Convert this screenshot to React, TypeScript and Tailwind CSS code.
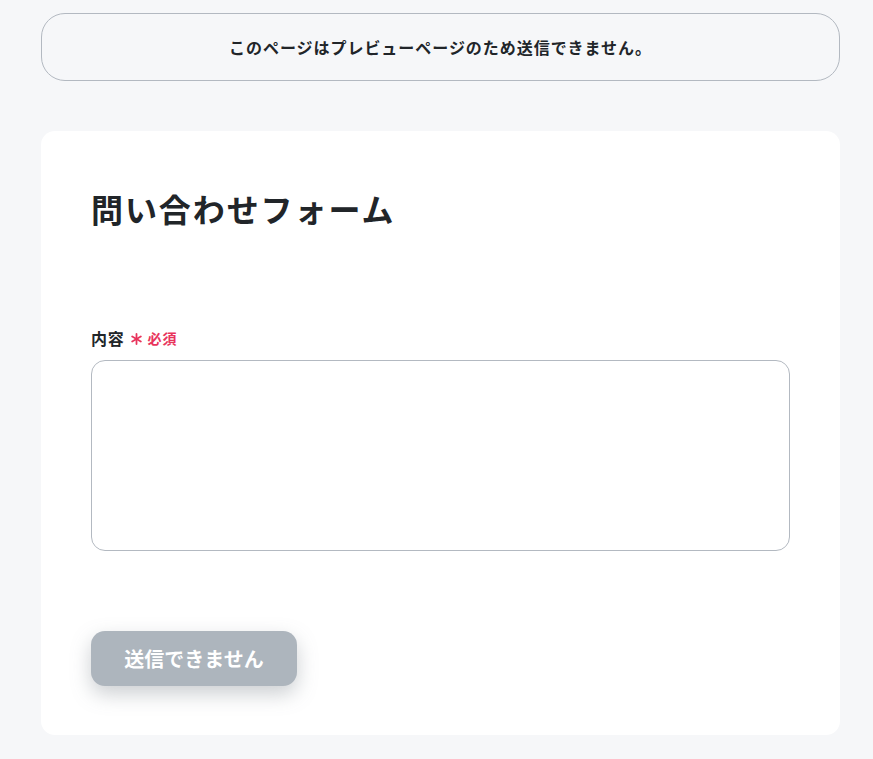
export default function App() {
  return (
    <div
      className="min-h-screen bg-[#f6f7f9] pt-[13px] pb-6 pl-[41px] pr-[33px] text-[#212529] tracking-[0.05em]"
      style={{ fontFamily: '"Noto Sans CJK JP", "Noto Sans", sans-serif' }}
    >
      {/* preview notice */}
      <div className="flex h-[68px] items-center justify-center rounded-[24px] border border-[#b3b9c1] bg-[#f6f7f9]">
        <p className="text-[16px] font-bold tracking-[0.06em]">このページはプレビューページのため送信できません。</p>
      </div>

      {/* form card */}
      <div className="mt-[50px] rounded-[14px] bg-white px-[50px] pt-[53px] pb-[49px]">
        <h1 className="text-[32px] leading-[48px] font-bold tracking-[0.06em]">問い合わせフォーム</h1>

        <div className="mt-[94px]">
          <label className="flex items-center gap-[5px] text-[16px] leading-[24px] font-bold">
            内容
            <span className="ml-[1px] flex items-center gap-[6px] text-[14px] text-[#e8345c]">
              <svg width="11" height="12" viewBox="0 0 11 12" className="mt-[2px]">
                <g stroke="#e8345c" strokeWidth="1.8" strokeLinecap="round">
                  <line x1="5.5" y1="1" x2="5.5" y2="11" />
                  <line x1="1.2" y1="3.5" x2="9.8" y2="8.5" />
                  <line x1="1.2" y1="8.5" x2="9.8" y2="3.5" />
                </g>
              </svg>
              必須
            </span>
          </label>
          <textarea className="mt-[10px] block h-[191px] w-full resize-none rounded-[14px] border border-[#b3b9c1] bg-white p-4 outline-none" />
        </div>

        <button
          type="button"
          disabled
          className="mt-[80px] flex h-[55px] w-[206px] items-center justify-center rounded-[14px] bg-[#adb5bd] text-[20px] font-bold tracking-normal text-white shadow-[0_8px_20px_rgba(108,117,125,0.35)]"
        >
          送信できません
        </button>
      </div>
    </div>
  );
}
